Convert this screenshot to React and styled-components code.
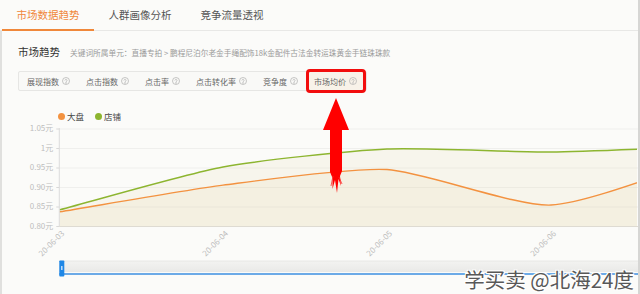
import React from "react";
import styled, { createGlobalStyle } from "styled-components";

const GlobalStyle = createGlobalStyle`
  html, body {
    margin: 0;
    padding: 0;
    background: #fbfbf9;
  }
  body {
    font-family: "Noto Sans CJK SC", "Noto Sans", sans-serif;
  }
`;

const Page = styled.div`
  position: relative;
  width: 640px;
  height: 294px;
  overflow: hidden;
  box-sizing: border-box;
  border-right: 2px solid #d6d6d4;
  background: #fbfbf9;
`;

const TabBar = styled.nav`
  display: flex;
  height: 31px;
  padding-left: 2px;
  box-sizing: border-box;
  border-bottom: 1px solid #e8e8e6;
`;

const Tab = styled.div`
  width: 92px;
  height: 31px;
  margin-bottom: -1px;
  box-sizing: border-box;
  text-align: center;
  font-size: 10.5px;
  line-height: 29px;
  color: ${(p) => (p.$active ? "#f0883a" : "#555")};
  border-bottom: 2px solid ${(p) => (p.$active ? "#f0883a" : "transparent")};
`;

const Panel = styled.section`
  height: 263px;
  border-left: 2px solid #e0e0de;
`;

const Header = styled.div`
  display: flex;
  align-items: baseline;
  gap: 10px;
  padding: 14px 0 0 16px;
  line-height: 14px;
`;

const Title = styled.h2`
  margin: 0;
  font-size: 10.5px;
  font-weight: 400;
  color: #333;
`;

const Crumb = styled.span`
  font-size: 7.7px;
  color: #9a9a9a;
  white-space: nowrap;
`;

const MetricBar = styled.div`
  display: inline-flex;
  align-items: center;
  height: 20px;
  margin: 11px 0 0 16px;
  box-sizing: border-box;
  border: 1px solid #e6e6e4;
  border-radius: 2px;
  background: #f9f9f7;
`;

const Metric = styled.div`
  display: flex;
  align-items: center;
  gap: 3px;
  box-sizing: border-box;
  height: ${(p) => (p.$selected ? "24px" : "18px")};
  padding: ${(p) => (p.$selected ? "0 6px 0 5px" : "0 8px")};
  font-size: 8px;
  color: #666;
  white-space: nowrap;
  border: ${(p) => (p.$selected ? "3px solid #f20d0d" : "none")};
  border-radius: ${(p) => (p.$selected ? "4px" : "0")};
  background: ${(p) => (p.$selected ? "#f8f2e9" : "transparent")};
`;

const Legend = styled.div`
  display: flex;
  align-items: center;
  gap: 11px;
  margin-top: 19px;
  padding-left: 56px;
  height: 12px;
`;

const LegendItem = styled.div`
  display: flex;
  align-items: center;
  gap: 2px;
  font-size: 8.5px;
  color: #444;
`;

const Dot = styled.span`
  width: 7px;
  height: 7px;
  border-radius: 50%;
  background: ${(p) => p.$color};
`;

const ChartSvg = styled.svg`
  display: block;
  width: 636px;
  height: 171px;
`;

const Watermark = styled.div`
  position: absolute;
  right: 4px;
  bottom: 3px;
  font-size: 20.5px;
  line-height: 24px;
  color: #585858;
  text-shadow: 1px 1px 0 #fff, -1px -1px 0 #fff, 1px -1px 0 #fff, -1px 1px 0 #fff;
  white-space: nowrap;
`;

const ArrowSvg = styled.svg`
  position: absolute;
  left: 318px;
  top: 96px;
  width: 36px;
  height: 100px;
`;

const ORANGE = "#f39240";
const GREEN = "#8db530";

const tabs = ["市场数据趋势", "人群画像分析", "竞争流量透视"];
const metrics = ["展现指数", "点击指数", "点击率", "点击转化率", "竞争度", "市场均价"];

// chart coords: origin at page (2, 123)
const AXIS_X = 57.3;
const AXIS_Y = 104.5;
const yFor = (v) => AXIS_Y - (v - 0.8) * 390;
const ticks = [57.3, 221, 385, 549, 713];
const dates = ["20-06-03", "20-06-04", "20-06-05", "20-06-06"];
const yLabels = [
  [1.05, "1.05元"],
  [1.0, "1元"],
  [0.95, "0.95元"],
  [0.9, "0.90元"],
  [0.85, "0.85元"],
  [0.8, "0.80元"],
];
const shopData = [0.8426, 0.9526, 0.9987, 0.991, 1.006];
const marketData = [0.8374, 0.906, 0.946, 0.855, 0.98];

function smoothPath(pts, s = 0.22) {
  const cps = pts.map((p, i) => {
    const prev = pts[i - 1] || p;
    const next = pts[i + 1] || p;
    const vx = (next[0] - prev[0]) * s;
    const vy = (next[1] - prev[1]) * s;
    const d0 = Math.hypot(p[0] - prev[0], p[1] - prev[1]);
    const d1 = Math.hypot(next[0] - p[0], next[1] - p[1]);
    const sum = d0 + d1 || 1;
    return [
      [p[0] - (vx * d0) / sum, p[1] - (vy * d0) / sum],
      [p[0] + (vx * d1) / sum, p[1] + (vy * d1) / sum],
    ];
  });
  let d = `M${pts[0][0]},${pts[0][1]}`;
  for (let i = 1; i < pts.length; i++) {
    const c1 = cps[i - 1][1];
    const c2 = cps[i][0];
    d += ` C${c1[0]},${c1[1]} ${c2[0]},${c2[1]} ${pts[i][0]},${pts[i][1]}`;
  }
  return d;
}

const HelpIcon = () => (
  <svg width="8" height="8" viewBox="0 0 16 16" fill="none" stroke="#a8a8a8" strokeWidth="1.3">
    <circle cx="8" cy="8" r="7" />
    <path d="M5.9 6.2a2.2 2.2 0 0 1 4.2.6c0 1.5-2.1 1.8-2.1 3" strokeLinecap="round" />
    <circle cx="8" cy="12" r="0.6" fill="#a8a8a8" />
  </svg>
);

const Chart = () => {
  const toPts = (data) => data.map((v, i) => [ticks[i], yFor(v)]);
  const shop = smoothPath(toPts(shopData));
  const market = smoothPath(toPts(marketData));
  const area = (d) => `${d} L713,${AXIS_Y} L${AXIS_X},${AXIS_Y} Z`;

  return (
    <ChartSvg viewBox="0 0 636 171">
      <defs>
        <clipPath id="plot">
          <rect x={AXIS_X} y="0" width={636 - AXIS_X - 1} height="171" />
        </clipPath>
        <linearGradient id="track" x1="0" y1="0" x2="0" y2="1">
          <stop offset="0" stopColor="#f3f3f1" />
          <stop offset="1" stopColor="#e9e9e7" />
        </linearGradient>
      </defs>

      {yLabels.map(([v, label]) => (
        <g key={label}>
          <line x1={AXIS_X} x2="636" y1={yFor(v)} y2={yFor(v)} stroke="#efefed" strokeWidth="1" />
          <line x1={AXIS_X - 3} x2={AXIS_X} y1={yFor(v)} y2={yFor(v)} stroke="#d8d8d8" strokeWidth="1" />
          <text
            x={AXIS_X - 6}
            y={yFor(v)}
            textAnchor="end"
            dominantBaseline="middle"
            fontSize="8"
            fill="#bdbdbd"
            fontFamily="Noto Sans CJK SC, sans-serif"
          >
            {label}
          </text>
        </g>
      ))}

      <g clipPath="url(#plot)">
        <path d={area(shop)} fill="rgba(222, 204, 150, 0.12)" />
        <path d={area(market)} fill="rgba(222, 204, 150, 0.12)" />
        <path d={shop} fill="none" stroke={GREEN} strokeWidth="1.4" />
        <path d={market} fill="none" stroke={ORANGE} strokeWidth="1.4" />
      </g>

      <line x1={AXIS_X} x2={AXIS_X} y1="6" y2={AXIS_Y} stroke="#dcdcdc" strokeWidth="1" />
      <line x1={AXIS_X} x2="636" y1={AXIS_Y} y2={AXIS_Y} stroke="#dedbd2" strokeWidth="1" />

      {dates.map((d, i) => (
        <text
          key={d}
          x={ticks[i] + 4}
          y={AXIS_Y + 6}
          transform={`rotate(-45 ${ticks[i] + 4} ${AXIS_Y + 6})`}
          textAnchor="end"
          dominantBaseline="middle"
          fontSize="8"
          fill="#bdbdbd"
          fontFamily="Noto Sans CJK SC, sans-serif"
        >
          {d}
        </text>
      ))}

      <rect x={AXIS_X} y="139" width={636 - AXIS_X} height="11" fill="url(#track)" />
      <line x1={AXIS_X} x2="636" y1="139" y2="139" stroke="#e4e4e2" strokeWidth="0.8" />
      <line x1={AXIS_X} x2="636" y1="152" y2="152" stroke="#3d8fe0" strokeWidth="1.5" />
      <rect x={AXIS_X} y="138.5" width="5" height="16" rx="0.8" fill="#1f87e6" />
      <rect x={AXIS_X + 1.8} y="144" width="1.4" height="4" fill="#cfe4fb" />
    </ChartSvg>
  );
};

const Arrow = () => (
  <ArrowSvg viewBox="318 96 36 100">
    <path
      d="M336 98 L349 130 L342 130 L342 171 L340 176 L341 186 L338.5 179 L337 193 L335 180 L332.5 189 L332.5 178 L330 172 L330 130 L323 130 Z"
      fill="#ff0000"
    />
    <path d="M333 176 L331 186 M339 177 L342 184" stroke="#ff3030" strokeWidth="0.8" fill="none" />
  </ArrowSvg>
);

export default function App() {
  return (
    <>
      <GlobalStyle />
      <Page>
        <TabBar>
          {tabs.map((t, i) => (
            <Tab key={t} $active={i === 0}>
              {t}
            </Tab>
          ))}
        </TabBar>
        <Panel>
          <Header>
            <Title>市场趋势</Title>
            <Crumb>关键词所属单元：直播专拍 &gt; 鹏程尼泊尔老金手绳配饰18k金配件古法金转运珠黄金手链珠珠款</Crumb>
          </Header>
          <MetricBar>
            {metrics.map((m, i) => (
              <Metric key={m} $selected={i === metrics.length - 1}>
                {m}
                <HelpIcon />
              </Metric>
            ))}
          </MetricBar>
          <Legend>
            <LegendItem>
              <Dot $color={ORANGE} />
              大盘
            </LegendItem>
            <LegendItem>
              <Dot $color={GREEN} />
              店铺
            </LegendItem>
          </Legend>
          <Chart />
        </Panel>
        <Arrow />
        <Watermark>学买卖 @北海24度</Watermark>
      </Page>
    </>
  );
}
